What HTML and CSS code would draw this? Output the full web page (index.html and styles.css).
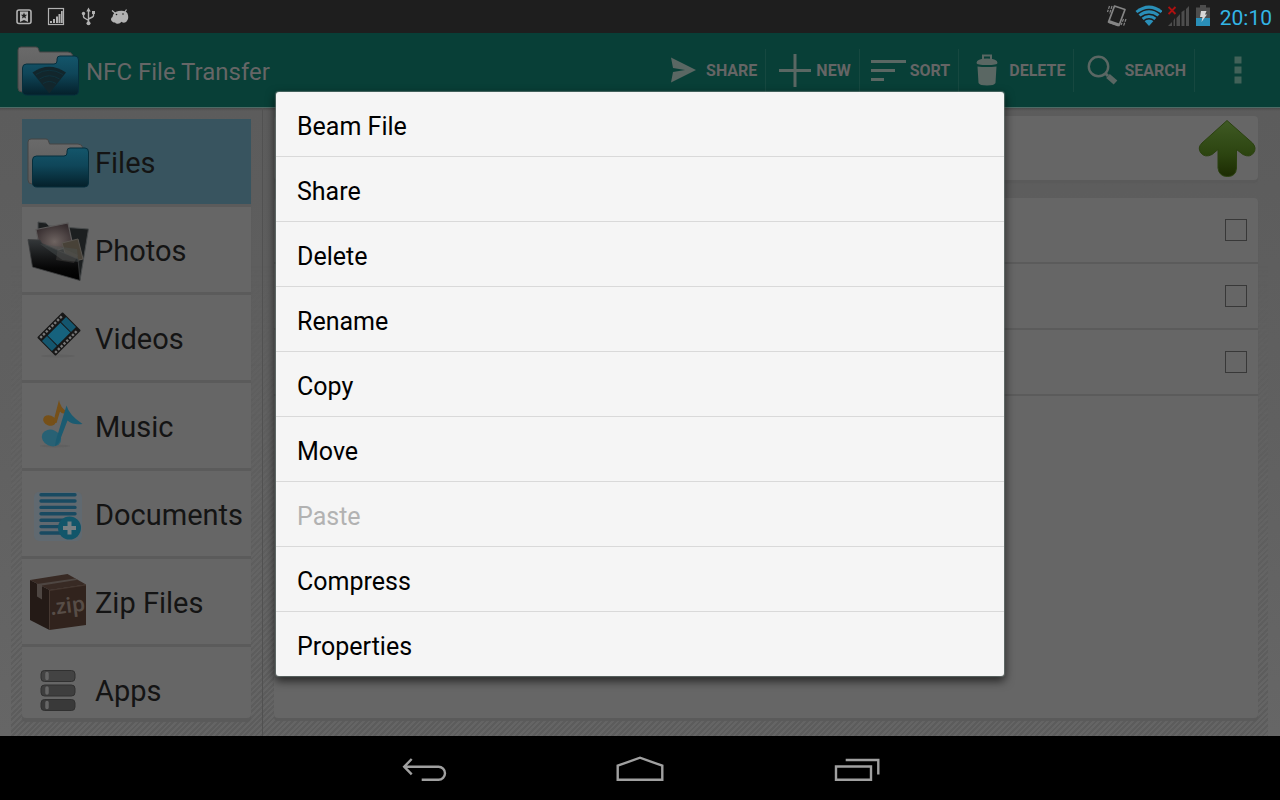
FILE: index.html
```html
<!DOCTYPE html>
<html lang="en">
<head>
<meta charset="utf-8">
<meta name="viewport" content="width=device-width, initial-scale=1">
<title>NFC File Transfer</title>
<link rel="stylesheet" href="styles.css">
</head>
<body>
<div class="status">
  <div class="status-left">
    <svg width="24" height="33" viewBox="0 0 24 33"><rect x="5" y="10" width="14" height="13.500" rx="2" fill="none" stroke="#b2b2b2" stroke-width="1.600"/><path d="M8 11.500h8v10.500l-4-2-4 2z" fill="#b2b2b2"/><path d="m12 12.500.9 2.200 2.300.1-1.800 1.500.6 2.300-2-1.300-2 1.300.6-2.300-1.800-1.500 2.300-.1z" fill="#1e1e1e"/></svg>
    <svg width="24" height="33" viewBox="0 0 24 33"><rect x="4.500" y="8.500" width="15" height="16" fill="none" stroke="#b2b2b2" stroke-width="1.200"/><path d="M6 21h2v2H6zM9 19h2v4H9zM12 16.500h2V23h-2zM14.500 14h2v9h-2zM17 11h1.700v12H17z" fill="#b2b2b2"/></svg>
    <svg width="24" height="33" viewBox="0 0 24 33"><path d="M12.500 10v13M7.500 14v2.500q0 1 1 1.500l4 2.500M17.500 13v2.500q0 1-1 1.500l-4 2" fill="none" stroke="#b2b2b2" stroke-width="1.400"/><path d="m12.500 7.500 2.200 4h-4.400zM16 11h3v3h-3z" fill="#b2b2b2"/><circle cx="7.500" cy="13.500" r="1.700" fill="#b2b2b2"/><circle cx="12.500" cy="23.200" r="2" fill="#b2b2b2"/></svg>
    <svg width="24" height="33" viewBox="0 0 24 33"><path d="M4 10.500 7 13M18.500 9.500l-2 3" stroke="#b2b2b2" stroke-width="1.200"/><path d="M4.500 17q.5-5 6-6 7-1.200 9 2.500 1.500 4 0 6.500-1 2.500-3.500 2.800-1.500 0-2.500-1-1.500 2-3.500 2-2 .3-3-1.200-3 0-4-2.800-.2-2 1.500-2.800z" fill="#b2b2b2"/><circle cx="8.500" cy="14.500" r=".8" fill="#1e1e1e"/><circle cx="15" cy="14" r=".8" fill="#1e1e1e"/></svg>
  </div>
  <div class="status-right">
    <svg width="24" height="33" viewBox="0 0 24 33"><g fill="none" stroke="#858585"><path d="M9.500 6 20 9.500 14 25.500 3.500 22z" stroke-width="1.700" stroke-linejoin="round"/><path d="M3.800 21.500 13.800 25" stroke-width="3"/><path d="M4.500 6 2.500 12M7 6 4.500 14M18.500 19 16 25M21 19 18.500 26" stroke-width="1.200" stroke-dasharray="3 1"/></g></svg>
    <svg width="27" height="33" viewBox="0 0 27 33"><path d="M14 26 .500 11Q14 0 27.500 11z" fill="#2a8fb8"/><path d="M2.500 14Q14 5 25.500 14M5.500 17.500Q14 11 22.500 17.500M8.500 21Q14 16.500 19.500 21" fill="none" stroke="#1e1e1e" stroke-width="1.600"/></svg>
    <svg width="22" height="33" viewBox="0 0 22 33"><path d="M4 22v4H0zM7 18v8H5.500v-5.500zM12 14v12H8.500v-8zM16.500 10v16h-3V12zM21 6v20h-3V9z" fill="#4d4d4d"/><path d="m.5 7 7 7M7.500 7l-7 7" stroke="#ad1010" stroke-width="1.900"/></svg>
    <svg width="14" height="33" viewBox="0 0 14 33"><path d="M4 5h6v2.500h4V18H0V7.500h4z" fill="#4d4d4d"/><path d="M0 18h14v8H0z" fill="#2a8fb8"/><path d="M5 11h5.500l-1.500 3.500h2L5.500 22l1-5H4z" fill="#d8d8d8"/></svg>
    <time class="clock">20:10</time>
  </div>
</div>

<header class="bar">
  <svg class="logo" width="64" height="64" viewBox="0 0 64 64">
    <defs>
      <linearGradient id="blue" x1="0" y1="0" x2="0" y2="1"><stop offset="0" stop-color="#14566b"/><stop offset=".45" stop-color="#0f4659"/><stop offset="1" stop-color="#04202a"/></linearGradient>
      <linearGradient id="grey" x1="0" y1="0" x2="0" y2="1"><stop offset="0" stop-color="#6a6a6a"/><stop offset="1" stop-color="#5a5a5a"/></linearGradient>
    </defs>
    <path id="back" d="M2 12q0-3 3-3h15q2 0 2.500 2l1 3H52q4 0 5 4v36H6q-4 0-4-4z" fill="url(#grey)" stroke="#454545" stroke-width="1"/>
    <path id="front" d="M6.500 30q0-4 4-4H38q3 0 3-3v-2q0-3 3-3h15q3.500 0 3.500 4v31q0 4-4 4H11q-4.500 0-4.500-4z" fill="url(#blue)" stroke="#062f3d" stroke-width="1"/>
    <path d="M33.300 55.500 16.500 34.500Q33 23 50 34.500z" fill="#12262c"/><path d="M20 36.500q13-8.500 27 0M23.500 41q10-6.500 20 0M27 45.500q6.500-4 13 0" fill="none" stroke="#0f323d" stroke-width="1"/>
  </svg>
  <h1 class="title">NFC File Transfer</h1>
  <nav class="actions">
    <button class="action"><svg width="43" height="36" viewBox="0 0 43 36"><path d="M8 5.500 33 18 8 30.500l2-10.500 12-2-12-2z" fill="#5a6763"/></svg>SHARE</button>
    <button class="action"><svg width="43" height="36" viewBox="0 0 43 36"><path d="M22 2v33M6 18.500h32" stroke="#5a6763" stroke-width="3"/></svg>NEW</button>
    <button class="action"><svg width="43" height="36" viewBox="0 0 43 36"><path d="M4 9.500h35M4 18.500h24M4 27.500h13" stroke="#5a6763" stroke-width="3.200"/></svg>SORT</button>
    <button class="action"><svg width="43" height="36" viewBox="0 0 43 36"><path d="M17 7V3.500h8V7" fill="none" stroke="#5a6763" stroke-width="2"/><path d="M10.500 11q0-4.500 10.500-4.500T31.500 11q0 2-10.500 2t-10.500-2zM11.500 14.500q9 1.200 19 0L29.500 31q-1 2.500-8.500 2.500T12.500 31z" fill="#5a6763"/></svg>DELETE</button>
    <button class="action"><svg width="43" height="36" viewBox="0 0 43 36"><circle cx="17.500" cy="14.500" r="9.700" fill="none" stroke="#5a6763" stroke-width="2.400"/><path d="m24.500 21.500 2.500 2.500" stroke="#5a6763" stroke-width="3"/><path d="m27 24 7.500 6.500" stroke="#5a6763" stroke-width="5.500"/></svg>SEARCH</button>
    <button class="overflow" aria-label="More options"><svg width="8" height="28" viewBox="0 0 8 28"><path d="M.5.500h7v7h-7zM.5 10.500h7v7h-7zM.5 20.500h7v7h-7z" fill="#426259"/></svg></button>
  </nav>
</header>

<main class="content">
  <aside class="side">
    <div class="cats">
      <button class="cat current"><svg width="64" height="64" viewBox="0 0 64 64"><use href="#back"/><use href="#front"/></svg><span>Files</span></button>
      <button class="cat"><svg width="64" height="64" viewBox="0 0 64 64">
        <defs><linearGradient id="dark" x1="0" y1="0" x2="0" y2="1"><stop offset="0" stop-color="#34383a"/><stop offset=".45" stop-color="#151617"/><stop offset=".7" stop-color="#060606"/><stop offset="1" stop-color="#000"/></linearGradient>
        <radialGradient id="sky" cx=".5" cy=".6" r=".6"><stop offset="0" stop-color="#6e6461"/><stop offset="1" stop-color="#352c2e"/></radialGradient></defs>
        <path d="m12 4 8 1 3 3 39.500 3L54 62.500 12 30z" fill="#1c1f20" stroke="#4a4d4e"/>
        <path d="m10 11.500 32-6.500 5 23-32 8z" fill="url(#sky)" stroke="#5c5a5a" stroke-width="1.200"/>
        <path d="m36 25 16-4 5 20-15 4z" fill="#484238" stroke="#5a5650"/>
        <path d="m2 21.500 12 .500 2 3.500 36 15.500 2 21.500L6.500 49z" fill="url(#dark)" stroke="#3c3e3f" stroke-width=".8"/>
        <path d="m14 26 37 5 1.500 13-16-2z" fill="#4c5152" opacity=".45"/><path d="m32 28 20 9-4 8-18-3z" fill="#55534f" opacity=".35"/>
      </svg><span>Photos</span></button>
      <button class="cat"><svg width="64" height="64" viewBox="0 0 64 64">
        <ellipse cx="32" cy="50" rx="17" ry="1.500" fill="#606060"/>
        <g transform="rotate(-45 33 28)"><rect x="15" y="15" width="36" height="26" rx="1" fill="#171717"/><path d="M17 17.500h32M17 38.500h32" stroke="#777" stroke-width="2.400" stroke-dasharray="2.400 1.600"/><rect x="16" y="21" width="7" height="14" fill="#14566e"/><rect x="24" y="21" width="18" height="14" fill="#16627d"/><rect x="43" y="21" width="7" height="14" fill="#14566e"/></g>
      </svg><span>Videos</span></button>
      <button class="cat"><svg width="64" height="64" viewBox="0 0 64 64">
        <ellipse cx="29" cy="52" rx="15" ry="1.400" fill="#606060"/>
        <ellipse cx="23.500" cy="26.500" rx="6.500" ry="5" transform="rotate(20 23.500 26.500)" fill="#765018"/><path d="M27 29 33 6q1 7 8 12-4 3-7-.5L30.500 29z" fill="#765018"/>
        <ellipse cx="25.500" cy="44" rx="10" ry="8" transform="rotate(25 25.500 44)" fill="#286174"/><path d="M30 46 40.500 11.500Q43 21 56.500 30q-9 1.500-15-3.500L34 46q-2 5-5 6z" fill="#1b5b71"/>
      </svg><span>Music</span></button>
      <button class="cat"><svg width="64" height="64" viewBox="0 0 64 64">
        <rect x="8" y="10" width="48" height="49" rx="5" fill="#606970"/>
        <path d="M15 12.700h34M15 19h34M15 25.400h34M15 31.800h34M15 38.200h34M15 44.600h34M15 51h34" stroke="#194a61" stroke-width="3.400" stroke-linecap="round"/>
        <circle cx="43.500" cy="46" r="11.500" fill="#12566a"/><path d="M43.500 39.500v13M37 46h13" stroke="#777f82" stroke-width="4"/>
      </svg><span>Documents</span></button>
      <button class="cat"><svg width="64" height="64" viewBox="0 0 64 64">
        <path d="m4 10 19.500 10V60L4 50z" fill="#241a16"/><path d="M23.500 20 60 14.500V55l-36.500 5z" fill="#31231d"/><path d="m4 10 37.500-6L60 14.500 23.500 20z" fill="#382a24"/>
        <path d="m11 14 38-5.500 3 1.200-36 5.800v14l-5-3z" fill="#4e4642"/><path d="M23.500 20.500 60 15M23.500 20v39" stroke="#493a32" stroke-width=".8"/>
        <text class="zip" x="25" y="45" transform="rotate(-7 25 45)">.zip</text>
      </svg><span>Zip Files</span></button>
      <button class="cat"><svg width="64" height="64" viewBox="0 0 64 64">
        <g stroke="#303030"><rect x="15" y="12.500" width="34" height="11" rx="3.500" fill="#434343"/><rect x="15" y="27" width="34" height="11" rx="3.500" fill="#3e3e3e"/><rect x="15" y="41.500" width="34" height="11" rx="3.500" fill="#393939"/></g>
        <path d="M21 15.500v5M21 30v5M21 44.500v5" stroke="#666" stroke-width="3.500" stroke-linecap="round"/>
      </svg><span>Apps</span></button>
    </div>
  </aside>
  <section class="pane">
    <div class="path">
      <button class="up" aria-label="Up one folder"><svg width="60" height="60" viewBox="0 0 60 60"><defs><linearGradient id="green" x1="0" y1="0" x2="0" y2="1"><stop offset="0" stop-color="#3f5a24"/><stop offset=".6" stop-color="#2c4410"/><stop offset="1" stop-color="#1c2b02"/></linearGradient></defs><path d="M30 2.500 55.500 25Q60 30 56.500 35T46 36.500L39.500 31.500V50Q39 58.500 30.500 58.500T21 50V31.500L15 36.500Q8 40 4 35T5 25z" fill="url(#green)" stroke="#2b4110" stroke-width="1"/></svg></button>
    </div>
    <ul class="files">
      <li class="file"><input type="checkbox" aria-label="Select first file"></li>
      <li class="file"><input type="checkbox" aria-label="Select second file"></li>
      <li class="file"><input type="checkbox" aria-label="Select third file"></li>
    </ul>
  </section>
  <div class="overlay">
    <div class="menu" role="menu">
      <button class="item" role="menuitem">Beam File</button>
      <button class="item" role="menuitem">Share</button>
      <button class="item" role="menuitem">Delete</button>
      <button class="item" role="menuitem">Rename</button>
      <button class="item" role="menuitem">Copy</button>
      <button class="item" role="menuitem">Move</button>
      <button class="item" role="menuitem" disabled>Paste</button>
      <button class="item" role="menuitem">Compress</button>
      <button class="item" role="menuitem">Properties</button>
    </div>
  </div>
</main>

<footer class="keys">
  <button class="key" aria-label="Back"><svg width="48" height="32" viewBox="0 0 48 32"><path d="m11.700 7-7.500 7.700 7.500 7.600M4 14.700h34.500a6.500 6.500 0 0 1 0 13H21.700"/></svg></button>
  <button class="key" aria-label="Home"><svg width="48" height="32" viewBox="0 0 48 32"><path d="M1.700 13.700 24 5.700l22.300 8v14H1.700z"/></svg></button>
  <button class="key" aria-label="Recent apps"><svg width="48" height="32" viewBox="0 0 48 32"><path d="M4 14.500h35v13.200H4zM13.700 8h32.600v14.500"/></svg></button>
</footer>
</body>
</html>
```
FILE: styles.css
```css
* { box-sizing: border-box; }

body {
  margin: 0;
  height: 100vh;
  display: flex;
  flex-direction: column;
  position: relative;
  overflow: hidden;
  background: #000;
  font-family: Roboto, "Noto Sans", sans-serif;
}

button {
  margin: 0;
  padding: 0;
  border: 0;
  background: none;
  color: inherit;
  font: inherit;
  text-align: left;
}

svg { display: block; flex: none; }

.status {
  display: flex;
  justify-content: space-between;
  height: 33px;
  padding: 0 8px 0 12px;
  background: #1e1e1e;
}
.status-left { display: flex; gap: 8px; }
.status-right { display: flex; gap: 6px; }
.clock { margin-left: 4px; font-size: 21px; line-height: 36px; color: #33b5e5; }

.bar {
  display: flex;
  align-items: center;
  height: 75px;
  padding-left: 16px;
  background: #083f37;
  border-bottom: 1px solid #4d6b66;
}
.title { margin: 0 0 0 6px; padding-top: 4px; font-size: 24px; line-height: 32px; font-weight: 400; color: #666; }
.actions { display: flex; flex: 1; justify-content: flex-end; align-items: center; }
.action {
  display: flex;
  align-items: center;
  height: 43px;
  padding: 0 8px 0 7px;
  border-right: 1px solid #164840;
  font-size: 16px;
  font-weight: 700;
  color: #656565;
}
.overflow { width: 85px; height: 43px; display: flex; justify-content: center; align-items: center; }

.content {
  flex: 1;
  min-height: 0;
  display: grid;
  grid-template-columns: 263px 1fr;
  position: relative;
  background: linear-gradient(#4c4c4c, #5c5c5c 3px, #606060 50%, #666);
}
.content::before {
  content: "";
  position: absolute;
  inset: 0 12px 0 11px;
  background: repeating-linear-gradient(135deg, #5c5c5c 0 2px, #656565 2px 4px);
  -webkit-mask-image: linear-gradient(transparent 25%, #000);
  mask-image: linear-gradient(transparent 25%, #000);
}

.side {
  position: relative;
  min-height: 0;
  padding: 11px 11px 18px 22px;
  border-right: 1px solid #515151;
}
.cats {
  height: 100%;
  overflow: hidden;
  border-radius: 0 0 4px 4px;
  background: #666;
  box-shadow: 0 4px 1px #5a5a5a;
}
.cat {
  display: flex;
  align-items: center;
  gap: 5px;
  width: 100%;
  height: 88px;
  padding: 11px 0 10px 4px;
  border-bottom: 3px solid #5b5b5b;
  font-size: 29px;
  line-height: 64px;
  color: #141414;
  white-space: nowrap;
}
.cat span { padding-top: 2px; }
.current { background: #38545f; }
.zip { font: 600 21px "Noto Sans", sans-serif; fill: #574d47; }

.pane {
  position: relative;
  min-width: 0;
  min-height: 0;
  display: flex;
  flex-direction: column;
  gap: 18px;
  padding: 8px 22px 18px 11px;
}
.path, .files { background: #666; border-radius: 4px; box-shadow: 0 3px 1px #5a5a5a; }
.path { display: flex; justify-content: flex-end; align-items: center; height: 64px; padding-right: 1px; }
.files { flex: 1; margin: 0; padding: 0; list-style: none; }
.file {
  display: flex;
  justify-content: flex-end;
  align-items: center;
  height: 66px;
  padding: 0 11px 1px 0;
  border-bottom: 2px solid #5b5b5b;
}
.file input {
  appearance: none;
  width: 22px;
  height: 22px;
  margin: 0;
  border: 1px solid #383838;
}

.overlay {
  position: absolute;
  inset: -76px 0 0;
  display: flex;
  justify-content: center;
  align-items: center;
}
.menu {
  width: 57%;
  max-width: 728px;
  overflow: hidden;
  border-radius: 3px;
  background: #f5f5f5;
  box-shadow: 0 0 1px 1px rgba(120, 135, 132, .6), 0 4px 10px 1px rgba(0, 0, 0, .65);
}
.item {
  display: block;
  width: 100%;
  height: 65px;
  padding: 4px 21px 0;
  border-bottom: 1px solid #d9d9d9;
  font-size: 25px;
  color: #000;
}
.item:last-child { height: 64px; border-bottom: 0; }
.item:disabled { color: #b2b2b2; }

.keys { display: flex; justify-content: center; gap: 120px; height: 64px; background: #000; }
.key { display: flex; justify-content: center; align-items: center; width: 96px; }
.key path { fill: none; stroke: #a0a0a0; stroke-width: 2.4; }
```
